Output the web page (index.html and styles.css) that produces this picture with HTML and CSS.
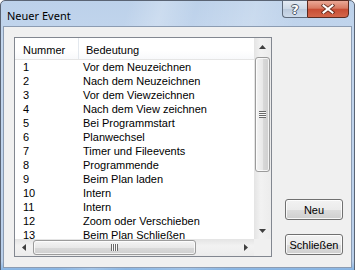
FILE: index.html
```html
<!DOCTYPE html>
<html lang="de">
<head>
    <meta charset="UTF-8">
    <title>Neuer Event</title>
    <link rel="stylesheet" href="styles.css">
</head>
<body>
    <div class="window">
        <div class="titlebar">
            <span class="title">Neuer Event</span>
            <div class="caption-btns">
                <div class="cap help">?</div>
                <div class="cap close">
                    <svg width="14" height="10" viewBox="0 0 14 10">
                        <path d="M2.5 1.5 L11.5 8.5 M11.5 1.5 L2.5 8.5" stroke="#4a1c12" stroke-width="3.8" stroke-linecap="square" fill="none" opacity="0.75"/>
                        <path d="M2.5 1.5 L11.5 8.5 M11.5 1.5 L2.5 8.5" stroke="#fff" stroke-width="2" stroke-linecap="square" fill="none"/>
                    </svg>
                </div>
            </div>
        </div>

        <div class="client">
            <div class="listbox">
                <div class="view">
                    <div class="header">
                        <div class="hcol hnum">Nummer</div>
                        <div class="hcol hdesc">Bedeutung</div>
                    </div>
                    <div class="rows">
                        <div class="row"><span class="num">1</span><span class="desc">Vor dem Neuzeichnen</span></div>
                        <div class="row"><span class="num">2</span><span class="desc">Nach dem Neuzeichnen</span></div>
                        <div class="row"><span class="num">3</span><span class="desc">Vor dem Viewzeichnen</span></div>
                        <div class="row"><span class="num">4</span><span class="desc">Nach dem View zeichnen</span></div>
                        <div class="row"><span class="num">5</span><span class="desc">Bei Programmstart</span></div>
                        <div class="row"><span class="num">6</span><span class="desc">Planwechsel</span></div>
                        <div class="row"><span class="num">7</span><span class="desc">Timer und Fileevents</span></div>
                        <div class="row"><span class="num">8</span><span class="desc">Programmende</span></div>
                        <div class="row"><span class="num">9</span><span class="desc">Beim Plan laden</span></div>
                        <div class="row"><span class="num">10</span><span class="desc">Intern</span></div>
                        <div class="row"><span class="num">11</span><span class="desc">Intern</span></div>
                        <div class="row"><span class="num">12</span><span class="desc">Zoom oder Verschieben</span></div>
                        <div class="row"><span class="num">13</span><span class="desc">Beim Plan Schließen</span></div>
                    </div>
                </div>

                <div class="vscroll">
                    <div class="arrow">
                        <svg width="7" height="4" viewBox="0 0 7 4"><polygon points="0,4 3.5,0 7,4" fill="#404040"/></svg>
                    </div>
                    <div class="thumb vthumb"><span class="grip vgrip"></span></div>
                    <div class="track"></div>
                    <div class="arrow">
                        <svg width="7" height="4" viewBox="0 0 7 4"><polygon points="0,0 7,0 3.5,4" fill="#404040"/></svg>
                    </div>
                </div>

                <div class="hscroll">
                    <div class="arrow">
                        <svg width="4" height="7" viewBox="0 0 4 7"><polygon points="4,0 4,7 0,3.5" fill="#404040"/></svg>
                    </div>
                    <div class="thumb hthumb"><span class="grip hgrip"></span></div>
                    <div class="track"></div>
                    <div class="arrow">
                        <svg width="4" height="7" viewBox="0 0 4 7"><polygon points="0,0 4,3.5 0,7" fill="#404040"/></svg>
                    </div>
                </div>

                <div class="corner"></div>
            </div>

            <div class="buttons">
                <button>Neu</button>
                <button>Schließen</button>
            </div>
        </div>
    </div>
</body>
</html>
```

FILE: styles.css
```css
* {
    box-sizing: border-box;
}
body {
    margin: 0;
    font-family: "Liberation Sans", Arial, sans-serif;
    font-size: 11px;
    color: #000;
    background: #fff;
    overflow: hidden;
}
.window {
    width: 355px;
    height: 280px;
    border: 1px solid #5a6474;
    border-radius: 5px 5px 0 0;
    display: flex;
    flex-direction: column;
    background:
        linear-gradient(105deg, rgba(255,255,255,0) 30%, rgba(255,255,255,0.22) 38%, rgba(255,255,255,0) 46%, rgba(255,255,255,0.18) 60%, rgba(255,255,255,0) 70%),
        linear-gradient(to bottom, #bcd1ea 0, #c3d6ed 40px, #b9cfea 260px, #7fb0e2 270px);
}
.titlebar {
    height: 25px;
    flex: none;
    display: flex;
    align-items: flex-start;
    padding: 0 5px 0 6px;
}
.title {
    font-family: "Noto Sans", sans-serif;
    font-size: 11px;
    line-height: 25px;
    padding-top: 2px;
    color: #000;
}
.caption-btns {
    margin-left: auto;
    margin-top: -1px;
    display: flex;
}
.cap {
    height: 18px;
    display: flex;
    align-items: center;
    justify-content: center;
}
.help {
    width: 25px;
    border: 1px solid #5e6a7b;
    border-right: none;
    border-radius: 0 0 0 4px;
    background: linear-gradient(#e3eaf3, #ccd8e6 50%, #bac9dc 51%, #cddaea);
    font-family: "DejaVu Sans", sans-serif;
    font-weight: bold;
    font-size: 13px;
    color: #fff;
    text-shadow: 1px 0 0 #4b5868, -1px 0 0 #4b5868, 0 1px 0 #4b5868, 0 -1px 0 #4b5868;
}
.close {
    width: 42px;
    border: 1px solid #5a2a20;
    border-radius: 0 0 4px 0;
    background: linear-gradient(#eaa896, #d87a62 45%, #c84d34 52%, #d3664a);
}
.client {
    margin: 0 2px;
    height: 242px;
    flex: none;
    border: 1px solid #8c9cb2;
    background: #f0f0f0;
    display: flex;
    align-items: stretch;
    padding: 10px 8px 10px 10px;
}
.listbox {
    width: 258px;
    height: 220px;
    flex: none;
    border: 1px solid #828790;
    background: #fff;
    display: grid;
    grid-template-columns: 1fr 17px;
    grid-template-rows: 1fr 17px;
}
.view {
    overflow: hidden;
    white-space: nowrap;
}
.header {
    height: 22px;
    display: flex;
    border-bottom: 1px solid #e5e5e5;
    background: linear-gradient(#fff, #fff 60%, #f8f9fb);
}
.hcol {
    line-height: 20px;
    padding-top: 2px;
}
.hnum {
    width: 64px;
    padding-left: 8px;
    border-right: 1px solid #e3e8ee;
}
.hdesc {
    padding-left: 7px;
}
.row {
    display: flex;
    height: 14px;
    line-height: 14px;
}
.row .num {
    width: 64px;
    padding-left: 8px;
}
.row .desc {
    padding-left: 4px;
}
.vscroll {
    display: flex;
    flex-direction: column;
    background: linear-gradient(to right, #e4e4e4, #f2f2f2 40%, #ececec);
}
.hscroll {
    display: flex;
    background: linear-gradient(to bottom, #e4e4e4, #f2f2f2 40%, #ececec);
}
.arrow {
    flex: none;
    width: 17px;
    height: 17px;
    display: flex;
    align-items: center;
    justify-content: center;
}
.track {
    flex: 1;
}
.thumb {
    flex: none;
    border: 1px solid #9b9b9b;
    border-radius: 3px;
    box-shadow: inset 0 0 0 1px rgba(255,255,255,0.75);
    display: flex;
    align-items: center;
    justify-content: center;
}
.vthumb {
    height: 115px;
    margin: 2px 1px 0 1px;
    background: linear-gradient(to right, #f4f4f4, #e8e8e8 50%, #d9d9d9 51%, #cfcfcf);
}
.hthumb {
    width: 163px;
    margin: 1px 0 1px 1px;
    background: linear-gradient(to bottom, #f4f4f4, #e8e8e8 50%, #d9d9d9 51%, #cfcfcf);
}
.grip {
    display: block;
}
.vgrip {
    width: 7px;
    height: 7px;
    background: repeating-linear-gradient(to bottom, #6a6a6a 0, #6a6a6a 1px, #fafafa 1px, #fafafa 2px);
}
.hgrip {
    width: 7px;
    height: 7px;
    background: repeating-linear-gradient(to right, #6a6a6a 0, #6a6a6a 1px, #fafafa 1px, #fafafa 2px);
}
.corner {
    background: #f0f0f0;
}
.buttons {
    width: 58px;
    margin-left: 13px;
    display: flex;
    flex-direction: column;
    justify-content: flex-end;
    gap: 14px;
    padding-bottom: 2px;
    height: 220px;
}
button {
    height: 21px;
    width: 58px;
    padding: 0;
    border: 1px solid #707070;
    border-radius: 3px;
    background: linear-gradient(#f2f2f2, #ebebeb 50%, #dddddd 51%, #cfcfcf);
    box-shadow: inset 0 0 0 1px rgba(255,255,255,0.8);
    font-family: "Liberation Sans", Arial, sans-serif;
    font-size: 11px;
    color: #000;
}
```
